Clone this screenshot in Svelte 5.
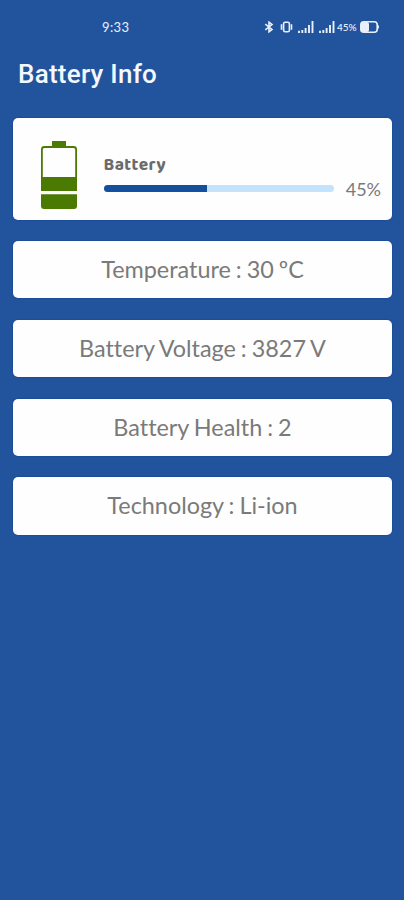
<script lang="ts">
  interface Detail {
    label: string;
    value: string;
  }

  const level = 45;

  const details: Detail[] = [
    { label: 'Temperature', value: '30 ºC' },
    { label: 'Battery Voltage', value: '3827 V' },
    { label: 'Battery Health', value: '2' },
    { label: 'Technology', value: 'Li-ion' },
  ];
</script>

<div class="screen">
  <div class="status-bar">
    <span class="clock">9:33</span>
    <div class="indicators">
      <svg class="bluetooth" width="10" height="12" viewBox="0 0 10 12">
        <path d="M1.3 3.2 8 8.4 5 10.8V1.2l3 2.4-6.7 5.2" />
      </svg>
      <svg class="vibrate" width="13" height="12" viewBox="0 0 13 12">
        <rect x="3.6" y="1.2" width="5.8" height="9.6" rx="1.6" />
        <path d="M1.5 3.3v5.4M11.5 3.3v5.4" />
      </svg>
      {#each [0, 1] as sim (sim)}
        <svg class="signal" width="16" height="12" viewBox="0 0 16 12">
          <path d="M1 9.7V12M4.3 9v3M7.6 7v5M11 4v8M14.5 0v12" />
        </svg>
      {/each}
      <span class="charge">{level}%</span>
      <svg class="cell" width="20" height="12" viewBox="0 0 20 12">
        <rect class="outline" x="0.8" y="0.8" width="16.4" height="10.4" rx="3" />
        <rect class="fill" x="1" y="1" width="8" height="10" rx="2" />
        <path class="fill" d="M18 3.8q2 2.2 0 4.4z" />
      </svg>
    </div>
  </div>

  <header>
    <h1>Battery Info</h1>
  </header>

  <main>
    <section class="card level-card">
      <svg class="battery" width="36" height="68" viewBox="0 0 36 68">
        <path class="solid" d="M11 0h14v6H11z" />
        <rect class="shell" x="0.9" y="6" width="34.2" height="43" rx="2.5" />
        <path class="solid" d="M0 36h36v14H0z" />
        <path class="solid" d="M0 53.3h36V65q0 3-3 3H3q-3 0-3-3z" />
      </svg>
      <div class="level">
        <h2>Battery</h2>
        <div class="level-row">
          <div class="track">
            <div class="bar" style="width: {level}%"></div>
          </div>
          <span class="percent">{level}%</span>
        </div>
      </div>
    </section>

    {#each details as item (item.label)}
      <section class="card detail">{item.label} : {item.value}</section>
    {/each}
  </main>
</div>

<style>
  :global(body) {
    background: #22549e;
  }

  .screen {
    min-height: 900px;
    box-sizing: border-box;
    background: #22549e;
    font-family: Lato, sans-serif;
    font-variant-ligatures: none;
  }

  .status-bar {
    display: flex;
    align-items: center;
    justify-content: space-between;
    height: 53px;
    padding: 0 24px 0 102px;
    color: #e9f0fb;
  }

  .clock {
    font-size: 13px;
    letter-spacing: 0.4px;
  }

  .indicators {
    display: flex;
    align-items: center;
  }

  .indicators svg {
    fill: none;
    stroke: #e9f0fb;
    stroke-width: 1.6;
  }

  .indicators .signal {
    margin-left: 5px;
    stroke-width: 1.9;
  }

  .indicators .vibrate {
    margin-left: 6px;
  }

  .indicators .fill {
    fill: #e9f0fb;
    stroke: none;
  }

  .charge {
    width: 20px;
    margin: 0 3px 0 2px;
    font-size: 10px;
    font-weight: 500;
  }

  header {
    display: flex;
    align-items: center;
    height: 42px;
    padding-left: 18px;
  }

  h1 {
    margin: 0;
    font-family: Roboto, sans-serif;
    font-size: 26px;
    font-weight: 500;
    letter-spacing: 0.25px;
    color: #f5f8fd;
  }

  main {
    display: flex;
    flex-direction: column;
    gap: 21.5px;
    padding: 23px 12px 0 13px;
  }

  .card {
    box-sizing: border-box;
    border-radius: 5px;
    background: #fefefe;
    box-shadow: 0 0 2px rgba(0, 50, 140, 0.6);
    color: #7a7a7a;
  }

  .level-card {
    display: flex;
    height: 101.5px;
    padding: 22.5px 11px 0 27.5px;
  }

  .level {
    flex: 1;
    margin: 14px 0 0 27px;
  }

  h2 {
    margin: 0;
    font-family: "Baloo 2", "Noto Sans", sans-serif;
    font-size: 17.5px;
    font-weight: 700;
    line-height: 20px;
    letter-spacing: 0.4px;
    color: #6b6b6b;
  }

  .level-row {
    display: flex;
    align-items: center;
    justify-content: space-between;
    height: 22px;
    margin-top: 3px;
  }

  .track {
    width: 230px;
    height: 7.5px;
    border-radius: 4px;
    overflow: hidden;
    background: #c2e3fb;
  }

  .bar {
    height: 100%;
    background: #15509f;
  }

  .percent {
    font-size: 18px;
  }

  .battery .solid {
    fill: #4b7a03;
  }

  .battery .shell {
    fill: none;
    stroke: #4b7a03;
    stroke-width: 1.8;
  }

  .detail {
    height: 57.3px;
    font-size: 23.4px;
    line-height: 57.3px;
    word-spacing: -1px;
    text-align: center;
  }
</style>
